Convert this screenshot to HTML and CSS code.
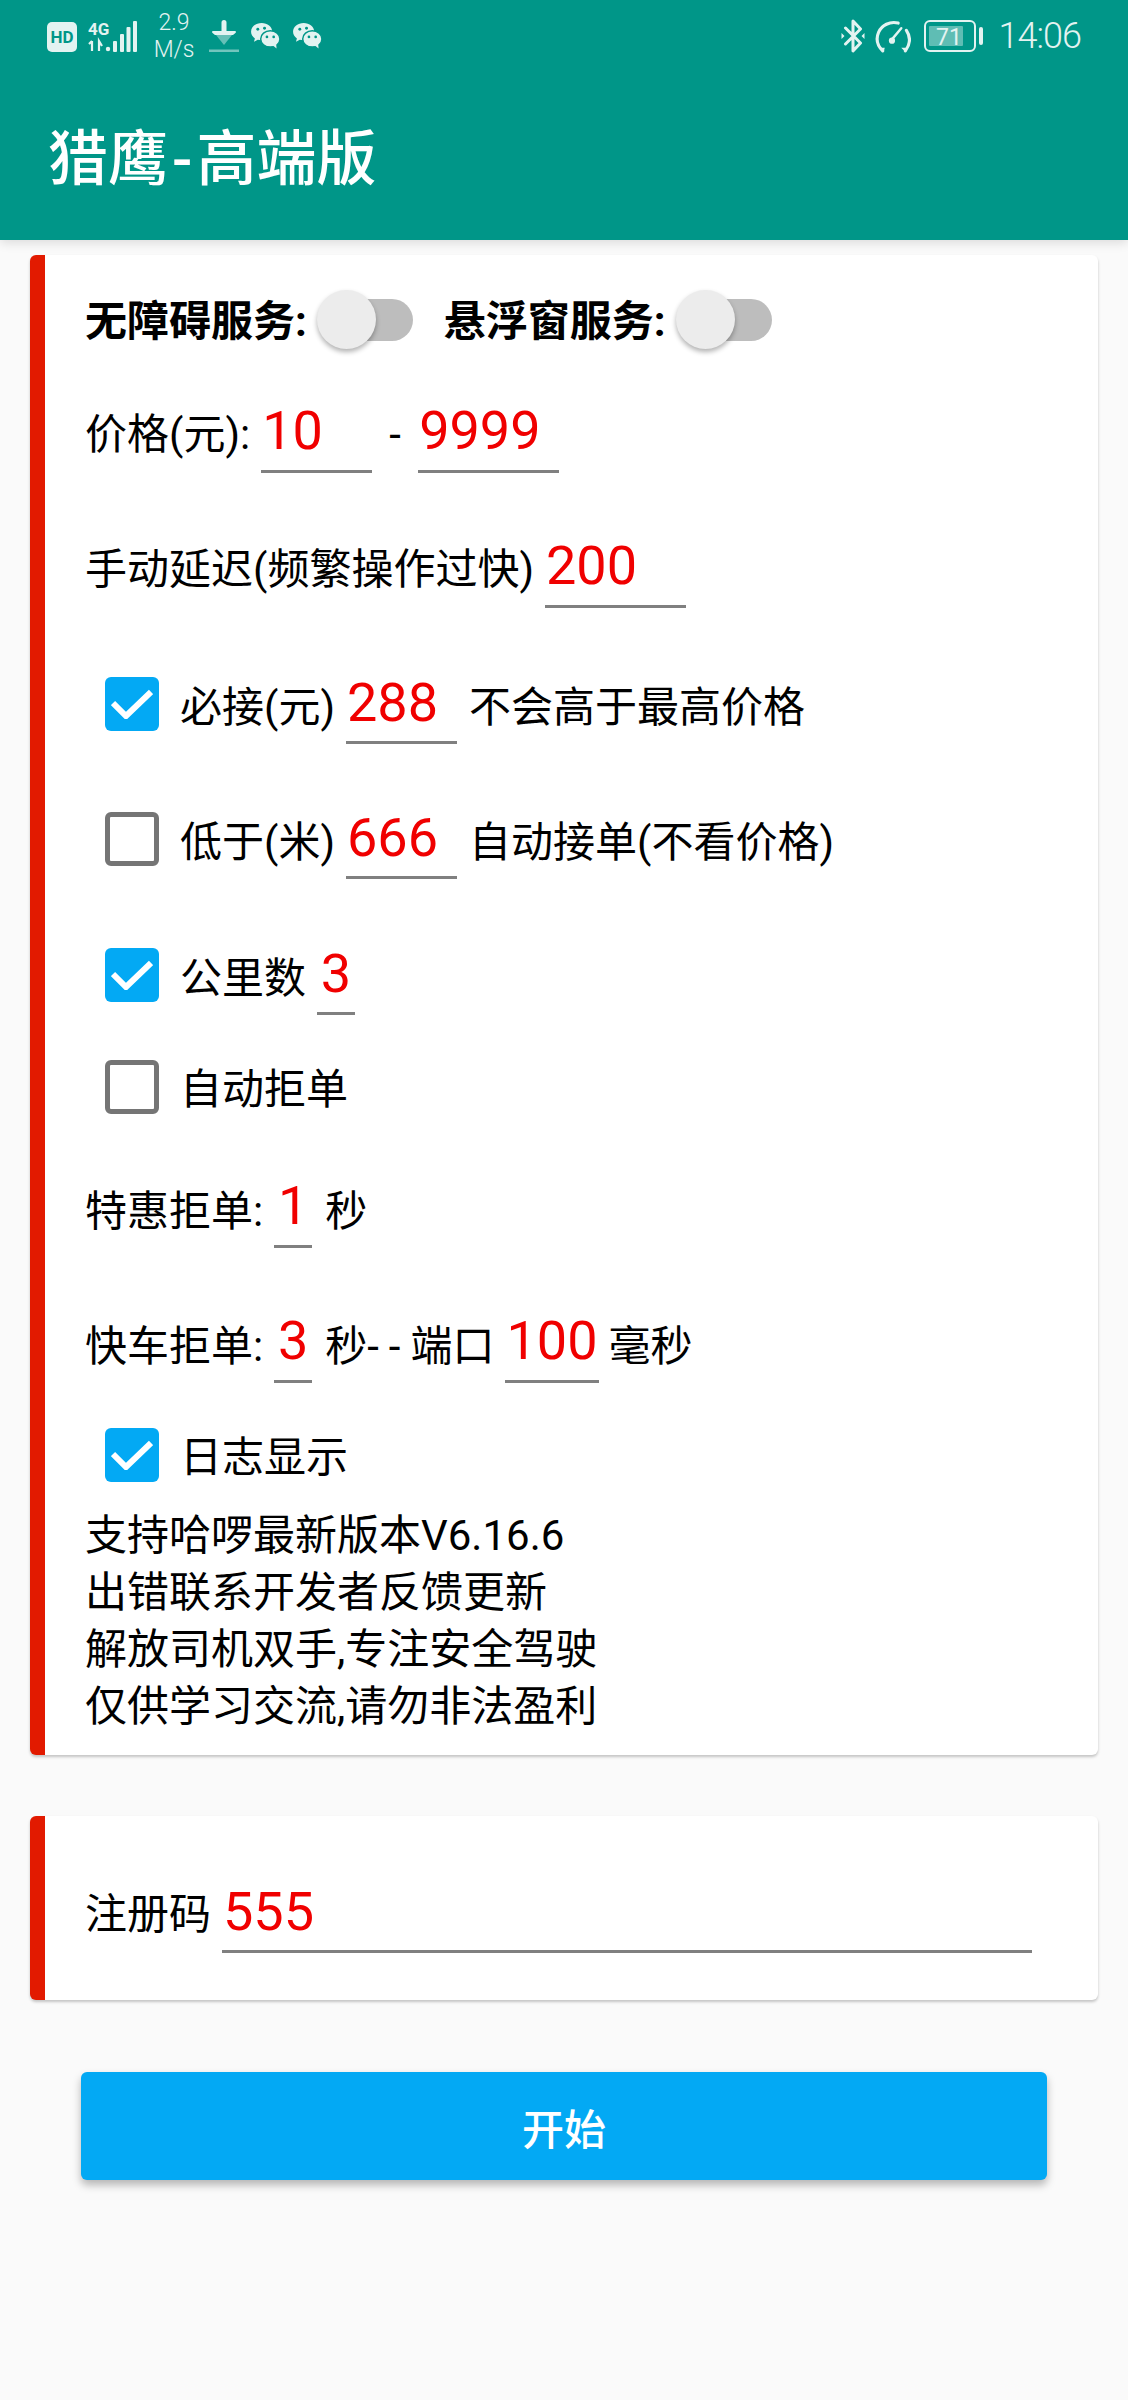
FILE: index.html
```html
<!DOCTYPE html>
<html lang="zh-CN">
<head>
  <meta charset="UTF-8">
  <meta name="viewport" content="width=device-width, initial-scale=1.0">
  <title>猎鹰-高端版</title>
  <link rel="stylesheet" href="styles.css">
</head>
<body>
  <header class="appbar">
    <div class="statusbar">
      <div class="status-left">
        <svg class="ic-hd" width="30" height="30" viewBox="0 0 30 30">
          <rect width="30" height="30" rx="5" fill="#e3f3f1"/>
          <text x="15" y="21" text-anchor="middle" class="ic-hd-text">HD</text>
        </svg>
        <svg class="ic-signal" width="49" height="32" viewBox="0 0 49 32">
          <text x="0" y="15" class="ic-4g-text">4G</text>
          <path d="M4 21v10M1 24l3-3M11 31v-10l3 5" stroke="#e3f3f1" stroke-width="2.200" fill="none"/>
          <circle cx="20" cy="29" r="2.200" fill="#e3f3f1"/>
          <rect x="25" y="21" width="4" height="11" rx="1" fill="#e3f3f1"/>
          <rect x="32" y="14" width="4" height="18" rx="1" fill="#e3f3f1"/>
          <rect x="38.500" y="7" width="4" height="25" rx="1" fill="#e3f3f1"/>
          <rect x="45" y="1" width="4" height="31" rx="1" fill="#e3f3f1"/>
        </svg>
        <div class="netspeed"><span>2.9</span><span>M/s</span></div>
        <svg class="ic-download" width="30" height="32" viewBox="0 0 30 32">
          <path d="M15 0a2.500 2.500 0 0 1 2.500 2.500V11H26a1 1 0 0 1 .7 1.700L24 15H6l-2.700-2.300A1 1 0 0 1 4 11h8.500V2.500A2.500 2.500 0 0 1 15 0z" fill="#e3f3f1"/>
          <path d="M7 15h16l-8 10z" fill="#e3f3f1" opacity=".45"/>
          <rect y="29.500" width="30" height="2.500" fill="#e3f3f1" opacity=".5"/>
        </svg>
        <svg class="ic-wechat" width="31" height="26" viewBox="0 0 30 27">
          <path d="M11 0C5 0 0 4 0 9c0 3 1.600 5.200 4 7l-1 3.500L7 17.500c1.200.3 2.600.5 4 .5 6 0 11-4 11-9s-5-9-11-9z" fill="#e3f3f1"/>
          <ellipse cx="20" cy="16.500" rx="10" ry="8.500" fill="#e3f3f1" stroke="#009688" stroke-width="1.500"/>
          <path d="M23 23.500l3.500 3-.5-5z" fill="#e3f3f1"/>
          <circle cx="7" cy="6.500" r="1.500" fill="#009688"/><circle cx="14" cy="5.500" r="1.500" fill="#009688"/>
          <circle cx="16.500" cy="14.500" r="1.400" fill="#009688"/><circle cx="23.500" cy="14.500" r="1.400" fill="#009688"/>
        </svg>
        <svg class="ic-wechat" width="31" height="26" viewBox="0 0 30 27">
          <path d="M11 0C5 0 0 4 0 9c0 3 1.600 5.200 4 7l-1 3.500L7 17.500c1.200.3 2.600.5 4 .5 6 0 11-4 11-9s-5-9-11-9z" fill="#e3f3f1"/>
          <ellipse cx="20" cy="16.500" rx="10" ry="8.500" fill="#e3f3f1" stroke="#009688" stroke-width="1.500"/>
          <path d="M23 23.500l3.500 3-.5-5z" fill="#e3f3f1"/>
          <circle cx="7" cy="6.500" r="1.500" fill="#009688"/><circle cx="14" cy="5.500" r="1.500" fill="#009688"/>
          <circle cx="16.500" cy="14.500" r="1.400" fill="#009688"/><circle cx="23.500" cy="14.500" r="1.400" fill="#009688"/>
        </svg>
      </div>
      <div class="status-right">
        <svg width="24" height="34" viewBox="0 0 23 34">
          <path d="M4 9l15 15-7.500 8V2L19 10 4 25" fill="none" stroke="#e3f3f1" stroke-width="3" stroke-linejoin="round" stroke-linecap="round"/>
          <path d="M0 14l3 3-3 3zM23 14l-3 3 3 3z" fill="#e3f3f1"/>
        </svg>
        <svg width="36" height="33" viewBox="0 0 34 32">
          <path d="M7 30C2 25 0 19 3 12 6 5 14 1 22 3" fill="none" stroke="#e3f3f1" stroke-width="3" stroke-linecap="round"/>
          <path d="M30 10c4 6 4 13-1 20" fill="none" stroke="#e3f3f1" stroke-width="3" stroke-linecap="round"/>
          <path d="M15 20L25 8" stroke="#e3f3f1" stroke-width="2.400" stroke-linecap="round"/>
          <circle cx="16" cy="20" r="3" fill="#e3f3f1"/>
          <path d="M3 27l5 4 1-4zM25 27l4 4 2-4z" fill="#e3f3f1"/>
        </svg>
        <svg class="ic-battery" width="59" height="32" viewBox="0 0 59 32">
          <rect x="1" y="1" width="50" height="30" rx="5" fill="none" stroke="#e3f3f1" stroke-width="2"/>
          <rect x="5" y="6" width="34" height="20" rx="1" fill="#e3f3f1" opacity=".42"/>
          <rect x="55" y="7" width="4" height="18" rx="2" fill="#e3f3f1"/>
          <text x="25" y="25" text-anchor="middle" class="ic-battery-text">71</text>
        </svg>
        <span class="clock">14:06</span>
      </div>
    </div>
    <h1 class="app-title">猎鹰<span class="title-dash">-</span>高端版</h1>
  </header>

  <main class="content">
    <section class="card card-settings">
      <div class="row row-switches">
        <span class="switch-label">无障碍服务:</span>
        <span class="switch"><span class="switch-thumb"></span></span>
        <span class="switch-label switch-label-second">悬浮窗服务:</span>
        <span class="switch"><span class="switch-thumb"></span></span>
      </div>

      <div class="row">
        <span>价格(元):</span>
        <span class="field field-price-low">10</span>
        <span class="dash">-</span>
        <span class="field field-price-high">9999</span>
      </div>

      <div class="row">
        <span>手动延迟(频繁操作过快)</span>
        <span class="field field-delay">200</span>
      </div>

      <div class="row row-check row-step">
        <span class="check is-on"><svg width="42" height="30" viewBox="0 0 42 30"><path d="M2 14l13 13L40 3" fill="none" stroke="#fff" stroke-width="6"/></svg></span>
        <span class="lbl">必接(元)</span>
        <span class="field field-three">288</span>
        <span class="lbl after">不会高于最高价格</span>
      </div>

      <div class="row row-check">
        <span class="check"></span>
        <span class="lbl">低于(米)</span>
        <span class="field field-three">666</span>
        <span class="lbl after">自动接单(不看价格)</span>
      </div>

      <div class="row row-check row-step">
        <span class="check is-on"><svg width="42" height="30" viewBox="0 0 42 30"><path d="M2 14l13 13L40 3" fill="none" stroke="#fff" stroke-width="6"/></svg></span>
        <span class="lbl">公里数</span>
        <span class="field field-one">3</span>
      </div>

      <div class="row row-plain row-after-check">
        <span class="check"></span>
        <span class="lbl">自动拒单</span>
      </div>

      <div class="row row-after-plain">
        <span class="lbl-sm">特惠拒单:</span>
        <span class="field field-one">1</span>
        <span class="lbl-sm after-tight">秒</span>
      </div>

      <div class="row">
        <span class="lbl-sm">快车拒单:</span>
        <span class="field field-one">3</span>
        <span class="lbl-sm after-tight">秒<span class="wide-dash">--</span>端口</span>
        <span class="field field-port">100</span>
        <span class="lbl-sm after-port">毫秒</span>
      </div>

      <div class="row row-plain row-log">
        <span class="check is-on"><svg width="42" height="30" viewBox="0 0 42 30"><path d="M2 14l13 13L40 3" fill="none" stroke="#fff" stroke-width="6"/></svg></span>
        <span class="lbl">日志显示</span>
      </div>

      <p class="note">支持哈啰最新版本V6.16.6<br>出错联系开发者反馈更新<br>解放司机双手,专注安全驾驶<br>仅供学习交流,请勿非法盈利</p>
    </section>

    <section class="card card-code">
      <div class="row">
        <span>注册码</span>
        <span class="field field-code">555</span>
      </div>
    </section>

    <button class="start-btn">开始</button>
  </main>
</body>
</html>
```

FILE: styles.css
```css
* {
  box-sizing: border-box;
}
body {
  margin: 0;
  height: 2400px;
  overflow: hidden;
  background-color: #fafafa;
  color: #000;
  font-family: Roboto, "Noto Sans CJK SC", sans-serif;
  font-size: 42px;
}

/* app bar + status bar */
.appbar {
  height: 240px;
  background-color: #009688;
  box-shadow: 0 3px 10px rgba(0, 0, 0, 0.12);
}
.statusbar {
  height: 72px;
  display: flex;
  justify-content: space-between;
  align-items: center;
  padding: 0 47px;
  color: #e3f3f1;
}
.status-left,
.status-right {
  display: flex;
  align-items: center;
}
.ic-hd {
  margin-top: 2px;
}
.ic-hd-text {
  font: 700 17px "Roboto", sans-serif;
  fill: #009688;
}
.ic-signal {
  margin-left: 11px;
}
.ic-4g-text {
  font: 700 17px "Roboto", sans-serif;
  fill: #e3f3f1;
}
.netspeed {
  width: 40px;
  margin-left: 17px;
  display: flex;
  flex-direction: column;
  align-items: center;
  font-size: 23px;
  line-height: 27px;
  font-weight: 300;
  white-space: nowrap;
}
.ic-download {
  margin-left: 15px;
}
.ic-wechat {
  margin-left: 11px;
}
.status-right svg + svg {
  margin-left: 10px;
}
.status-right .ic-battery {
  margin-left: 13px;
}
.ic-battery-text {
  font: 400 23px "Roboto", sans-serif;
  fill: #e3f3f1;
}
.clock {
  margin-left: 16px;
  font-size: 36px;
  font-weight: 300;
  letter-spacing: -1px;
  line-height: 40px;
}
.app-title {
  margin: 0;
  padding: 55px 0 0 48px;
  color: #fff;
  font-size: 60px;
  line-height: 66px;
  font-weight: 500;
}
.title-dash {
  margin: 0 4px;
}

/* cards */
.content {
  padding: 15px 30px 0;
}
.card {
  background: #fff;
  border-left: 15px solid #e21a00;
  border-radius: 6px;
  box-shadow: 0 2px 3px rgba(0, 0, 0, 0.22);
  padding-left: 40px;
}
.card-settings {
  height: 1500px;
  padding-top: 25px;
}
.card-code {
  height: 184px;
  margin-top: 61px;
  padding-top: 61px;
}

/* rows */
.row {
  height: 76px;
  display: flex;
  align-items: center;
  white-space: nowrap;
  line-height: 50px;
}
.row + .row {
  margin-top: 59px;
}
.row-switches {
  height: 80px;
  font-weight: 700;
}
.row-switches + .row {
  margin-top: 37px;
}
.row-check {
  padding-left: 20px;
}
.row-check .check {
  margin-bottom: 4px;
}
.row-check .field {
  line-height: 70px;
}
.row + .row-step {
  margin-top: 60px;
}
.row-plain {
  height: 54px;
  padding-left: 20px;
}
.row + .row-after-check {
  margin-top: 45px;
}
.row + .row-after-plain {
  margin-top: 58px;
}
.row + .row-log {
  margin-top: 45px;
}

/* labels sit a little lower than the inputs beside them */
.lbl {
  padding-top: 4px;
}
.row-plain .lbl {
  padding-top: 6px;
}
.lbl-sm {
  padding-top: 3px;
}
.wide-dash {
  letter-spacing: 10px;
}

/* switches */
.switch-label {
  padding-top: 3px;
}
.switch-label-second {
  margin-left: 31px;
}
.switch {
  position: relative;
  width: 86px;
  height: 42px;
  margin-left: 20px;
  border-radius: 21px;
  background: #bdbdbd;
}
.switch-thumb {
  position: absolute;
  left: -10px;
  top: -9px;
  width: 59px;
  height: 59px;
  border-radius: 50%;
  background: #ececec;
  box-shadow: 0 3px 5px rgba(0, 0, 0, 0.3);
}

/* checkboxes */
.check {
  flex: none;
  width: 54px;
  height: 54px;
  margin-right: 21px;
  border: 5px solid #757575;
  border-radius: 6px;
  background: #fff;
}
.check.is-on {
  display: flex;
  align-items: center;
  justify-content: center;
  border: none;
  background: #03a9f4;
}

/* underlined inputs */
.field {
  height: 76px;
  padding: 0 0 0 1px;
  margin-left: 11px;
  border-bottom: 3px solid #808080;
  color: #f00000;
  font-size: 54px;
  line-height: 68px;
}
.field-price-low {
  width: 111px;
}
.field-price-high {
  width: 141px;
  margin-left: 0;
}
.field-delay {
  width: 141px;
}
.field-three {
  width: 111px;
}
.field-one {
  width: 38px;
  text-align: center;
  padding: 0;
}
.field-port {
  width: 94px;
}
.field-code {
  flex: none;
  width: 810px;
  line-height: 70px;
}
.dash {
  width: 46px;
  text-align: center;
}
.after {
  margin-left: 12px;
}
.after-tight {
  margin-left: 13px;
}
.after-port {
  margin-left: 9px;
}
.note {
  margin: 25px 0 0;
  line-height: 57px;
}

/* start button */
.start-btn {
  display: block;
  width: 966px;
  height: 108px;
  margin: 72px 0 0 51px;
  border: none;
  border-radius: 6px;
  background: #03a9f4;
  color: #fff;
  font-family: inherit;
  font-size: 42px;
  font-weight: 500;
  box-shadow: 0 5px 9px rgba(0, 0, 0, 0.28);
}
```
